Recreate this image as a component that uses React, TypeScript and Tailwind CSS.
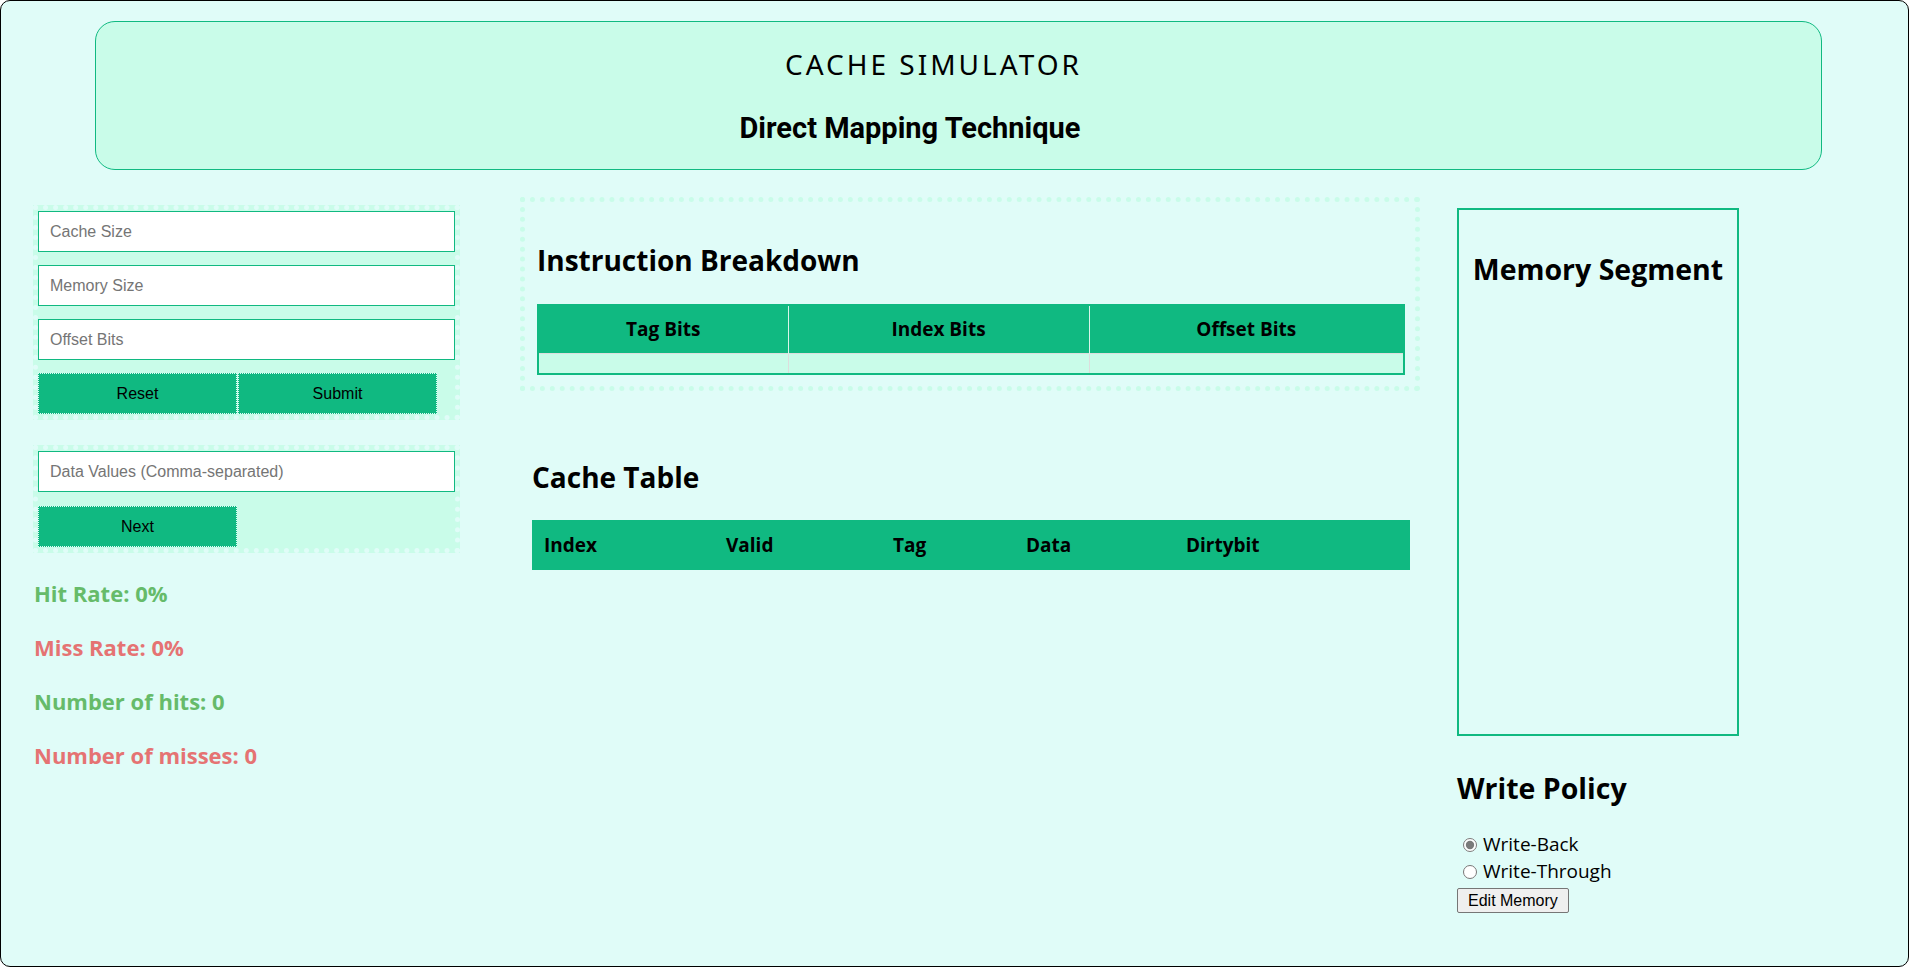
import React, { useState } from 'react'

const sans = { fontFamily: '"Open Sans", "Noto Sans", sans-serif' }
const arial = { fontFamily: '"Liberation Sans", Arial, sans-serif' }

function Stat({ label, color }: { label: string; color: string }) {
  return <p className={`text-[22px] leading-[28px] font-bold mb-[26px] ${color}`}>{label}</p>
}

export default function App() {
  const [policy, setPolicy] = useState('back')

  return (
    <div className="w-[1909px] h-[967px] bg-white">
      <div className="w-full h-full rounded-[10px] border border-black bg-[#e0fcf8] overflow-hidden" style={sans}>
        <header className="ml-[94px] mt-[20px] w-[1727px] h-[149px] rounded-[20px] border border-[#10b981] bg-[#c9fce9] pt-[24px]">
          <h1 className="text-center pr-[50px] text-[28px] leading-[36px] tracking-[3px] font-normal text-black" style={{ fontFamily: '"Noto Sans", sans-serif' }}>
            CACHE SIMULATOR
          </h1>
          <h2 className="mt-[28px] text-center pr-[97px] text-[29px] leading-[36px] font-bold text-black" style={{ fontFamily: 'Roboto, sans-serif' }}>
            Direct Mapping Technique
          </h2>
        </header>

        <div className="flex items-start">
          {/* left: inputs + stats */}
          <div className="ml-[32px] mt-[35px] w-[427px]">
            <div className="border-[5px] border-dotted border-[#e0fcf8] bg-[#c9fce9] py-[1px]">
              {['Cache Size', 'Memory Size', 'Offset Bits'].map((ph) => (
                <input
                  key={ph}
                  placeholder={ph}
                  className="block w-full h-[41px] mb-[13px] border border-[#10b981] bg-white pl-[11px] text-[16px] placeholder:text-[#757575] outline-none"
                  style={arial}
                />
              ))}
              <div className="flex gap-[1px]" style={arial}>
                <button className="w-[199px] h-[41px] bg-[#10b981] border border-dotted border-[#e0fcf8] text-[16px] text-black">Reset</button>
                <button className="w-[199px] h-[41px] bg-[#10b981] border border-dotted border-[#e0fcf8] text-[16px] text-black">Submit</button>
              </div>
            </div>

            <div className="mt-[25px] border-[5px] border-dotted border-[#e0fcf8] bg-[#c9fce9] py-[1px]">
              <input
                placeholder="Data Values (Comma-separated)"
                className="block w-full h-[41px] mb-[14px] border border-[#10b981] bg-white pl-[11px] text-[16px] placeholder:text-[#757575] outline-none"
                style={arial}
              />
              <button className="w-[199px] h-[41px] bg-[#10b981] border border-dotted border-[#e0fcf8] text-[16px] text-black" style={arial}>
                Next
              </button>
            </div>

            <div className="mt-[26px] pl-[1px]">
              <Stat label="Hit Rate: 0%" color="text-[#66bb6a]" />
              <Stat label="Miss Rate: 0%" color="text-[#e57373]" />
              <Stat label="Number of hits: 0" color="text-[#66bb6a]" />
              <Stat label="Number of misses: 0" color="text-[#e57373]" />
            </div>
          </div>

          {/* middle: breakdown + cache table */}
          <div className="ml-[60px] mt-[27px] w-[900px]">
            <div className="border-[5px] border-dotted border-[#c9fce9] pt-[40px] pb-[11px] pl-[12px] pr-[10px]">
              <h2 className="text-[28px] leading-[36px] font-bold text-black">Instruction Breakdown</h2>
              <table className="mt-[26px] w-[868px] border-2 border-[#10b981] border-collapse">
                <thead>
                  <tr className="bg-[#10b981] h-[48px]">
                    <th className="w-[250px] text-[19px] font-bold text-black text-center border-r border-[#d9f5ea]">Tag Bits</th>
                    <th className="w-[301px] text-[19px] font-bold text-black text-center border-r border-[#d9f5ea]">Index Bits</th>
                    <th className="text-[19px] font-bold text-black text-center">Offset Bits</th>
                  </tr>
                </thead>
                <tbody>
                  <tr className="bg-[#c9fce9] h-[21px]">
                    <td className="border-r border-t border-[#dddddd]"></td>
                    <td className="border-r border-t border-[#dddddd]"></td>
                    <td className="border-t border-[#dddddd]"></td>
                  </tr>
                </tbody>
              </table>
            </div>

            <div className="ml-[12px] mt-[68px] w-[878px]">
              <h2 className="text-[28px] leading-[36px] font-bold text-black">Cache Table</h2>
              <table className="mt-[25px] w-full border-collapse">
                <thead>
                  <tr className="bg-[#10b981] h-[50px] text-left">
                    <th className="w-[182px] pl-[12px] text-[19px] font-bold text-black">Index</th>
                    <th className="w-[167px] pl-[12px] text-[19px] font-bold text-black">Valid</th>
                    <th className="w-[133px] pl-[12px] text-[19px] font-bold text-black">Tag</th>
                    <th className="w-[160px] pl-[12px] text-[19px] font-bold text-black">Data</th>
                    <th className="pl-[12px] text-[19px] font-bold text-black">Dirtybit</th>
                  </tr>
                </thead>
                <tbody></tbody>
              </table>
            </div>
          </div>

          {/* right: memory + write policy */}
          <div className="ml-[37px] mt-[38px] w-[282px]">
            <div className="h-[528px] border-2 border-[#10b981] pt-[41px]">
              <h2 className="text-center text-[28.5px] leading-[36px] font-bold text-black">Memory Segment</h2>
            </div>

            <h2 className="mt-[34px] text-[28.5px] leading-[36px] font-bold text-black">Write Policy</h2>
            <div className="mt-[25px] text-[19px] text-black">
              <label className="flex items-center h-[27px]">
                <input
                  type="radio"
                  name="policy"
                  checked={policy === 'back'}
                  onChange={() => setPolicy('back')}
                  className="ml-[6px] mr-[6px] w-[14px] h-[14px] accent-[#7a7a7a]"
                />
                Write-Back
              </label>
              <label className="flex items-center h-[27px]">
                <input
                  type="radio"
                  name="policy"
                  checked={policy === 'through'}
                  onChange={() => setPolicy('through')}
                  className="ml-[6px] mr-[6px] w-[14px] h-[14px] accent-[#7a7a7a]"
                />
                Write-Through
              </label>
            </div>
            <button
              className="mt-[3px] h-[25px] px-[10px] bg-[#efefef] border border-[#767676] rounded-[2px] text-[16px] text-black leading-none"
              style={arial}
            >
              Edit Memory
            </button>
          </div>
        </div>
      </div>
    </div>
  )
}
